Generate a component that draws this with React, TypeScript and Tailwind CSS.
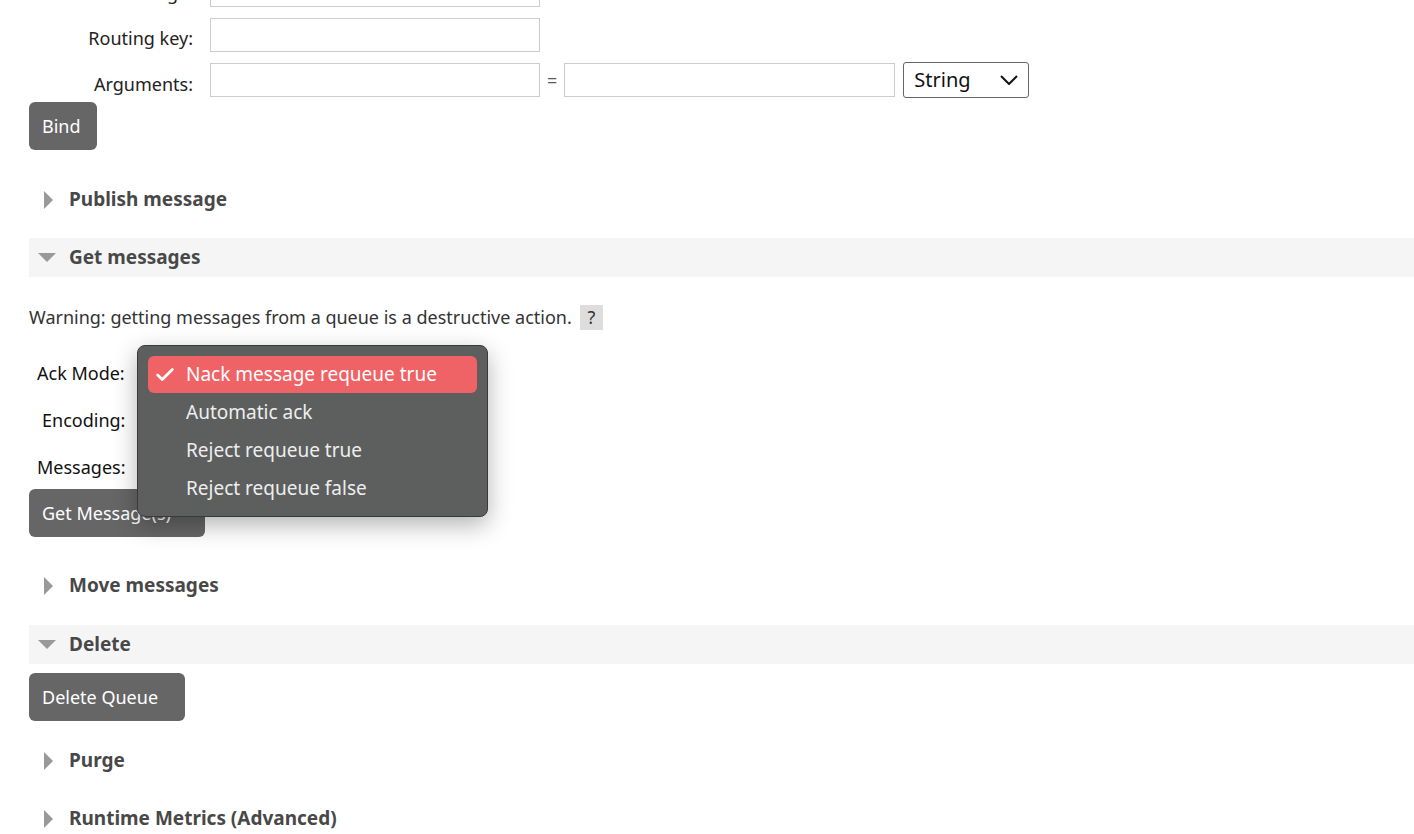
import { Check } from 'lucide-react'

const font = "[font-family:'DejaVu_Sans',Verdana,sans-serif]"

function Tri({ open }: { open?: boolean }) {
  return open ? (
    <svg width="18" height="10" viewBox="0 0 18 10" className="mr-[13px] ml-[9px]">
      <path d="M0 0 L18 0 L9 9 Z" fill="#999" />
    </svg>
  ) : (
    <svg width="10" height="18" viewBox="0 0 10 18" className="mr-[15px] ml-[15px]">
      <path d="M0 0 L9 9 L0 18 Z" fill="#999" />
    </svg>
  )
}

function Section({ title, open }: { title: string; open?: boolean }) {
  return (
    <div className={`flex items-center h-[39px] ${open ? 'bg-[#f5f5f5]' : ''}`}>
      <Tri open={open} />
      <span className="font-bold text-[19px] text-[#484848]">{title}</span>
    </div>
  )
}

function Btn({ children, w }: { children: string; w: string }) {
  return (
    <button className={`h-[48px] ${w} rounded-[6px] bg-[#666] text-white text-[18px] text-left px-[13px] whitespace-nowrap`}>
      {children}
    </button>
  )
}

export default function App() {
  const opts = ['Automatic ack', 'Reject requeue true', 'Reject requeue false']
  return (
    <div className={`${font} text-[18px] text-[#333] h-[834px] overflow-hidden bg-white pl-[29px]`}>
      <div className="mt-[-28px] flex flex-col gap-[10px]">
        {['From exchange:', 'Routing key:'].map((l) => (
          <div key={l} className="flex items-center">
            <label className="w-[164px] text-right text-[#222] pt-[8px] whitespace-nowrap">{l}</label>
            <div className="ml-[17px] w-[330px] h-[34px] border border-[#ccc]" />
          </div>
        ))}
        <div className="flex items-center">
          <label className="w-[164px] text-right text-[#222] pt-[8px]">Arguments:</label>
          <div className="ml-[17px] w-[330px] h-[34px] border border-[#ccc]" />
          <span className="mx-[7px] text-[#555]">=</span>
          <div className="w-[331px] h-[34px] border border-[#ccc]" />
          <div className="ml-[8px] w-[126px] h-[36px] border border-[#666] rounded-[3px] flex items-center justify-between px-[10px] text-[#111] font-['Liberation_Sans',sans-serif] text-[20px]">
            <span>String</span>
            <svg width="18" height="10" viewBox="0 0 18 10"><path d="M1 1 L9 9 L17 1" stroke="#111" strokeWidth="2" fill="none" /></svg>
          </div>
        </div>
      </div>
      <div className="mt-[4px]"><Btn w="w-[68px]">Bind</Btn></div>
      <div className="mt-[30px]"><Section title="Publish message" /></div>
      <div className="mt-[19px]"><Section title="Get messages" open /></div>
      <div className="mt-[27px] flex items-center">
        <span>Warning: getting messages from a queue is a destructive action.</span>
        <span className="ml-[8px] w-[23px] h-[25px] bg-[#ddd] flex items-center justify-center">?</span>
      </div>
      <div className="relative">
        <div className="flex flex-col pl-[8px] text-[#111] gap-[20px] mt-[29px]">
          <span>Ack Mode:</span>
          <span className="pl-[5px]">Encoding:</span>
          <span>Messages:</span>
        </div>
        <div className="mt-[8px]"><Btn w="w-[176px]">Get Message(s)</Btn></div>
        <div className="absolute left-[108px] top-[-15px] w-[351px] h-[172px] rounded-[8px] bg-[#5d5f5e] border border-[#3a3a3a] shadow-[0_8px_24px_rgba(0,0,0,0.3)] p-[10px] font-['Inter',sans-serif] text-[19px] text-[#eee]">
          <div className="h-[37px] rounded-[6px] bg-[#ef6366] flex items-center text-white">
            <Check size={22} strokeWidth={3} className="ml-[6px] mr-[10px]" />
            Nack message requeue true
          </div>
          {opts.map((o) => (
            <div key={o} className="h-[38px] flex items-center pl-[38px]">{o}</div>
          ))}
        </div>
      </div>
      <div className="mt-[29px]"><Section title="Move messages" /></div>
      <div className="mt-[20px]"><Section title="Delete" open /></div>
      <div className="mt-[9px]"><Btn w="w-[156px]">Delete Queue</Btn></div>
      <div className="mt-[20px]"><Section title="Purge" /></div>
      <div className="mt-[19px]"><Section title="Runtime Metrics (Advanced)" /></div>
    </div>
  )
}
